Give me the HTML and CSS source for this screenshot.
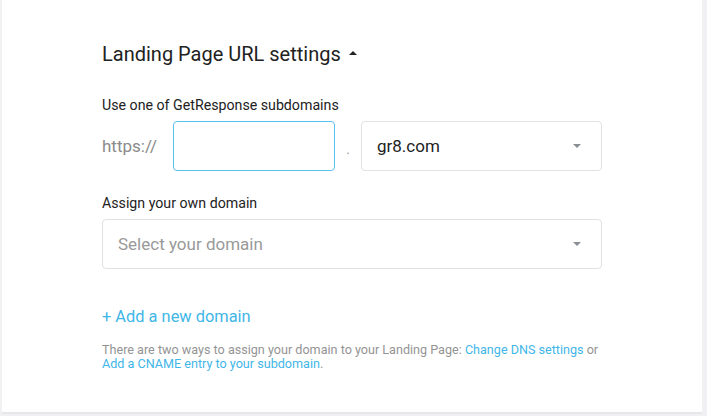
FILE: index.html
```html
<!DOCTYPE html>
<html lang="en">
<head>
    <meta charset="UTF-8">
    <meta name="viewport" content="width=device-width, initial-scale=1.0">
    <title>Landing Page URL settings</title>
    <link rel="stylesheet" href="styles.css">
</head>
<body>
    <div class="panel">
        <h2 class="title">Landing Page URL settings <span class="caret-up"></span></h2>

        <div class="form-group">
            <label>Use one of GetResponse subdomains</label>
            <div class="url-row">
                <span class="proto">https://</span>
                <input type="text" class="sub-input">
                <span class="dot">.</span>
                <div class="select">
                    <span class="value">gr8.com</span>
                    <span class="caret-down"></span>
                </div>
            </div>
        </div>

        <div class="form-group">
            <label>Assign your own domain</label>
            <div class="select wide">
                <span class="placeholder">Select your domain</span>
                <span class="caret-down"></span>
            </div>
        </div>

        <a class="add-link" href="#">+ Add a new domain</a>

        <p class="note">There are two ways to assign your domain to your Landing Page: <a href="#">Change DNS settings</a> or <a href="#">Add a CNAME entry to your subdomain</a>.</p>
    </div>
</body>
</html>
```

FILE: styles.css
```css
body {
    margin: 0;
    background-color: #f1f1f3;
    font-family: Roboto, "Liberation Sans", sans-serif;
    color: #222;
}
.panel {
    width: 600px;
    height: 380px;
    margin-left: 2px;
    padding: 32px 0 0 100px;
    background: #fff;
    border-bottom: 2px solid #e6e6e8;
}
.title {
    margin: 0 0 19px;
    font-size: 20px;
    font-weight: 400;
    line-height: 44px;
    color: #222;
}
.caret-up {
    display: inline-block;
    margin-left: 3px;
    vertical-align: middle;
    position: relative;
    top: -3px;
    border-left: 4px solid transparent;
    border-right: 4px solid transparent;
    border-bottom: 4px solid #222;
}
.form-group {
    width: 500px;
    margin-bottom: 22px;
}
.form-group label {
    display: block;
    font-size: 14.2px;
    line-height: 20px;
    margin-bottom: 6px;
    color: #222;
}
.url-row {
    display: flex;
    align-items: center;
}
.proto {
    font-size: 17px;
    color: #8a8a8a;
    width: 71px;
}
.sub-input {
    width: 162px;
    height: 50px;
    box-sizing: border-box;
    border: 1px solid #5cc0ec;
    border-radius: 4px;
    outline: none;
}
.dot {
    width: 26px;
    text-align: center;
    color: #999;
    font-size: 14px;
    padding-top: 6px;
}
.select {
    flex: 1;
    height: 50px;
    box-sizing: border-box;
    border: 1px solid #e2e2e4;
    border-radius: 4px;
    display: flex;
    align-items: center;
    justify-content: space-between;
    padding: 0 20px 0 15px;
    font-size: 17px;
}
.placeholder {
    color: #999;
}
.caret-down {
    border-left: 4px solid transparent;
    border-right: 4px solid transparent;
    border-top: 4px solid #8a8f96;
}
.add-link {
    display: inline-block;
    margin-top: 16px;
    font-size: 16.4px;
    color: #3fb6e8;
    text-decoration: none;
}
.note {
    margin: 17px 0 0;
    font-size: 12.6px;
    line-height: 14px;
    color: #949494;
    width: 505px;
}
.note a {
    color: #3fb6e8;
    text-decoration: none;
}
```
